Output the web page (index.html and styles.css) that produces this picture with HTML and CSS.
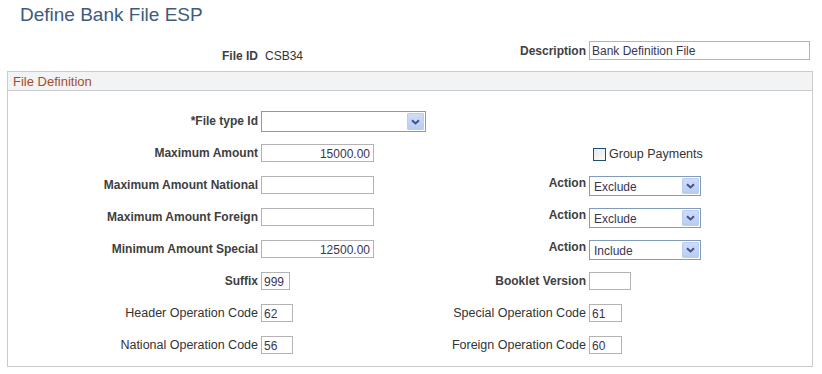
FILE: index.html
```html
<!DOCTYPE html>
<html lang="en">

<head>
    <meta charset="UTF-8">
    <meta name="viewport" content="width=device-width, initial-scale=1.0">
    <title>Define Bank File ESP</title>
    <link rel="stylesheet" href="styles.css">
</head>

<body>
    <h1 class="page-title">Define Bank File ESP</h1>

    <div class="form-grid top-row">
        <div class="lbl lbl-b lbl-low">File ID</div>
        <div class="value lbl-low">CSB34</div>
        <div class="lbl lbl-b">Description</div>
        <div><input class="edit w-desc" type="text" value="Bank Definition File"></div>
    </div>

    <div class="group-box">
        <div class="group-head">File Definition</div>
        <div class="form-grid group-body">
            <!-- row 1 -->
            <div class="lbl lbl-b">*File type Id</div>
            <div>
                <div class="dropdown w-type">
                    <span class="dd-text"></span>
                    <span class="dd-btn"><svg width="9" height="6" viewBox="0 0 9 6"><path d="M1 1.2 L4.5 4.5 L8 1.2" fill="none" stroke="#3f5580" stroke-width="2"/></svg></span>
                </div>
            </div>
            <div></div>
            <div></div>

            <!-- row 2 -->
            <div class="lbl lbl-b">Maximum Amount</div>
            <div><input class="edit num w-amt" type="text" value="15000.00"></div>
            <div></div>
            <div class="check-wrap">
                <span class="checkbox"></span>
                <span class="check-lbl">Group Payments</span>
            </div>

            <!-- row 3 -->
            <div class="lbl lbl-b">Maximum Amount National</div>
            <div><input class="edit num w-amt" type="text" value=""></div>
            <div class="lbl lbl-b lbl-top">Action</div>
            <div>
                <div class="dropdown w-action">
                    <span class="dd-text">Exclude</span>
                    <span class="dd-btn"><svg width="9" height="6" viewBox="0 0 9 6"><path d="M1 1.2 L4.5 4.5 L8 1.2" fill="none" stroke="#3f5580" stroke-width="2"/></svg></span>
                </div>
            </div>

            <!-- row 4 -->
            <div class="lbl lbl-b">Maximum Amount Foreign</div>
            <div><input class="edit num w-amt" type="text" value=""></div>
            <div class="lbl lbl-b lbl-top">Action</div>
            <div>
                <div class="dropdown w-action">
                    <span class="dd-text">Exclude</span>
                    <span class="dd-btn"><svg width="9" height="6" viewBox="0 0 9 6"><path d="M1 1.2 L4.5 4.5 L8 1.2" fill="none" stroke="#3f5580" stroke-width="2"/></svg></span>
                </div>
            </div>

            <!-- row 5 -->
            <div class="lbl lbl-b">Minimum Amount Special</div>
            <div><input class="edit num w-amt" type="text" value="12500.00"></div>
            <div class="lbl lbl-b lbl-top">Action</div>
            <div>
                <div class="dropdown w-action">
                    <span class="dd-text">Include</span>
                    <span class="dd-btn"><svg width="9" height="6" viewBox="0 0 9 6"><path d="M1 1.2 L4.5 4.5 L8 1.2" fill="none" stroke="#3f5580" stroke-width="2"/></svg></span>
                </div>
            </div>

            <!-- row 6 -->
            <div class="lbl lbl-b">Suffix</div>
            <div><input class="edit w-suffix" type="text" value="999"></div>
            <div class="lbl lbl-b">Booklet Version</div>
            <div><input class="edit w-booklet" type="text" value=""></div>

            <!-- row 7 -->
            <div class="lbl">Header Operation Code</div>
            <div><input class="edit w-code" type="text" value="62"></div>
            <div class="lbl">Special Operation Code</div>
            <div><input class="edit w-code2" type="text" value="61"></div>

            <!-- row 8 -->
            <div class="lbl">National Operation Code</div>
            <div><input class="edit w-code" type="text" value="56"></div>
            <div class="lbl">Foreign Operation Code</div>
            <div><input class="edit w-code2" type="text" value="60"></div>
        </div>
    </div>
</body>

</html>
```

FILE: styles.css
```css
* {
    margin: 0;
    padding: 0;
    box-sizing: border-box;
}

body {
    width: 822px;
    font-family: "Liberation Sans", Arial, sans-serif;
    font-size: 12px;
    color: #333;
    background: #fff;
}

.page-title {
    font-size: 19px;
    font-weight: normal;
    line-height: 22px;
    color: #3e5a7e;
    padding: 4px 0 0 20px;
}

/* shared 4 column layout: label | field | label | field */
.form-grid {
    display: grid;
    grid-template-columns: 250px 180px 142px 1fr;
    column-gap: 3px;
}

.top-row {
    margin: 15px 0 0 8px;
    grid-auto-rows: 19px;
}

.lbl {
    text-align: right;
    white-space: nowrap;
    line-height: 18px;
    align-self: center;
    font-size: 12.5px;
    color: #333;
}

.lbl-b {
    font-size: 12px;
    font-weight: bold;
    color: #404040;
}

.lbl-top {
    align-self: start;
    line-height: 15px;
}

.lbl-low {
    align-self: start;
    line-height: 14px;
    padding-top: 8px;
}

.value {
    padding-left: 4px;
    color: #333;
}

.edit {
    display: block;
    height: 18px;
    border: 1px solid #b3b3b3;
    font-family: "Liberation Sans", Arial, sans-serif;
    font-size: 12px;
    color: #3a3550;
    padding: 1px 2px 0 2px;
    background: #fff;
    outline: none;
}

.edit.num {
    text-align: right;
    padding-right: 3px;
}

.w-desc {
    width: 221px;
    height: 19px;
}

.w-amt {
    width: 113px;
}

.w-suffix {
    width: 29px;
}

.w-code {
    width: 32px;
}

.w-code2 {
    width: 33px;
}

.w-booklet {
    width: 42px;
}

.group-box {
    margin: 11px 0 0 7px;
    width: 806px;
    border: 1px solid #cbcbcb;
}

.group-head {
    height: 19px;
    line-height: 19px;
    font-size: 13px;
    background: #f1f3f4;
    border-bottom: 1px solid #cbcbcb;
    color: #a44d2b;
    padding-left: 5px;
}

.group-body {
    padding: 20px 0 12px 0;
    grid-template-rows: 19px repeat(7, 18px);
    row-gap: 14px;
}

.dropdown {
    display: flex;
    align-items: center;
    justify-content: space-between;
    height: 21px;
    border: 1px solid #7f9db9;
    background: #fff;
    padding: 0 1px 0 4px;
    color: #3a3550;
}

.w-type {
    width: 165px;
}

.w-action {
    width: 112px;
    height: 20px;
}

.dd-text {
    line-height: 16px;
    padding-top: 1px;
}

.dd-btn {
    display: flex;
    align-items: center;
    justify-content: center;
    width: 17px;
    height: 17px;
    border: 1px solid #bccdf3;
    background: linear-gradient(#cfdcfa, #b9cbf5);
    border-radius: 1px;
}

.w-action .dd-btn {
    height: 16px;
}

.check-wrap {
    display: flex;
    align-items: center;
    padding-left: 4px;
    padding-top: 2px;
}

.checkbox {
    width: 13px;
    height: 13px;
    border: 1px solid #1e4f7a;
    background: linear-gradient(135deg, #e6e9e4, #fbfbf9);
    margin-right: 3px;
}

.check-lbl {
    color: #333;
    font-size: 12.5px;
    line-height: 16px;
}
```
